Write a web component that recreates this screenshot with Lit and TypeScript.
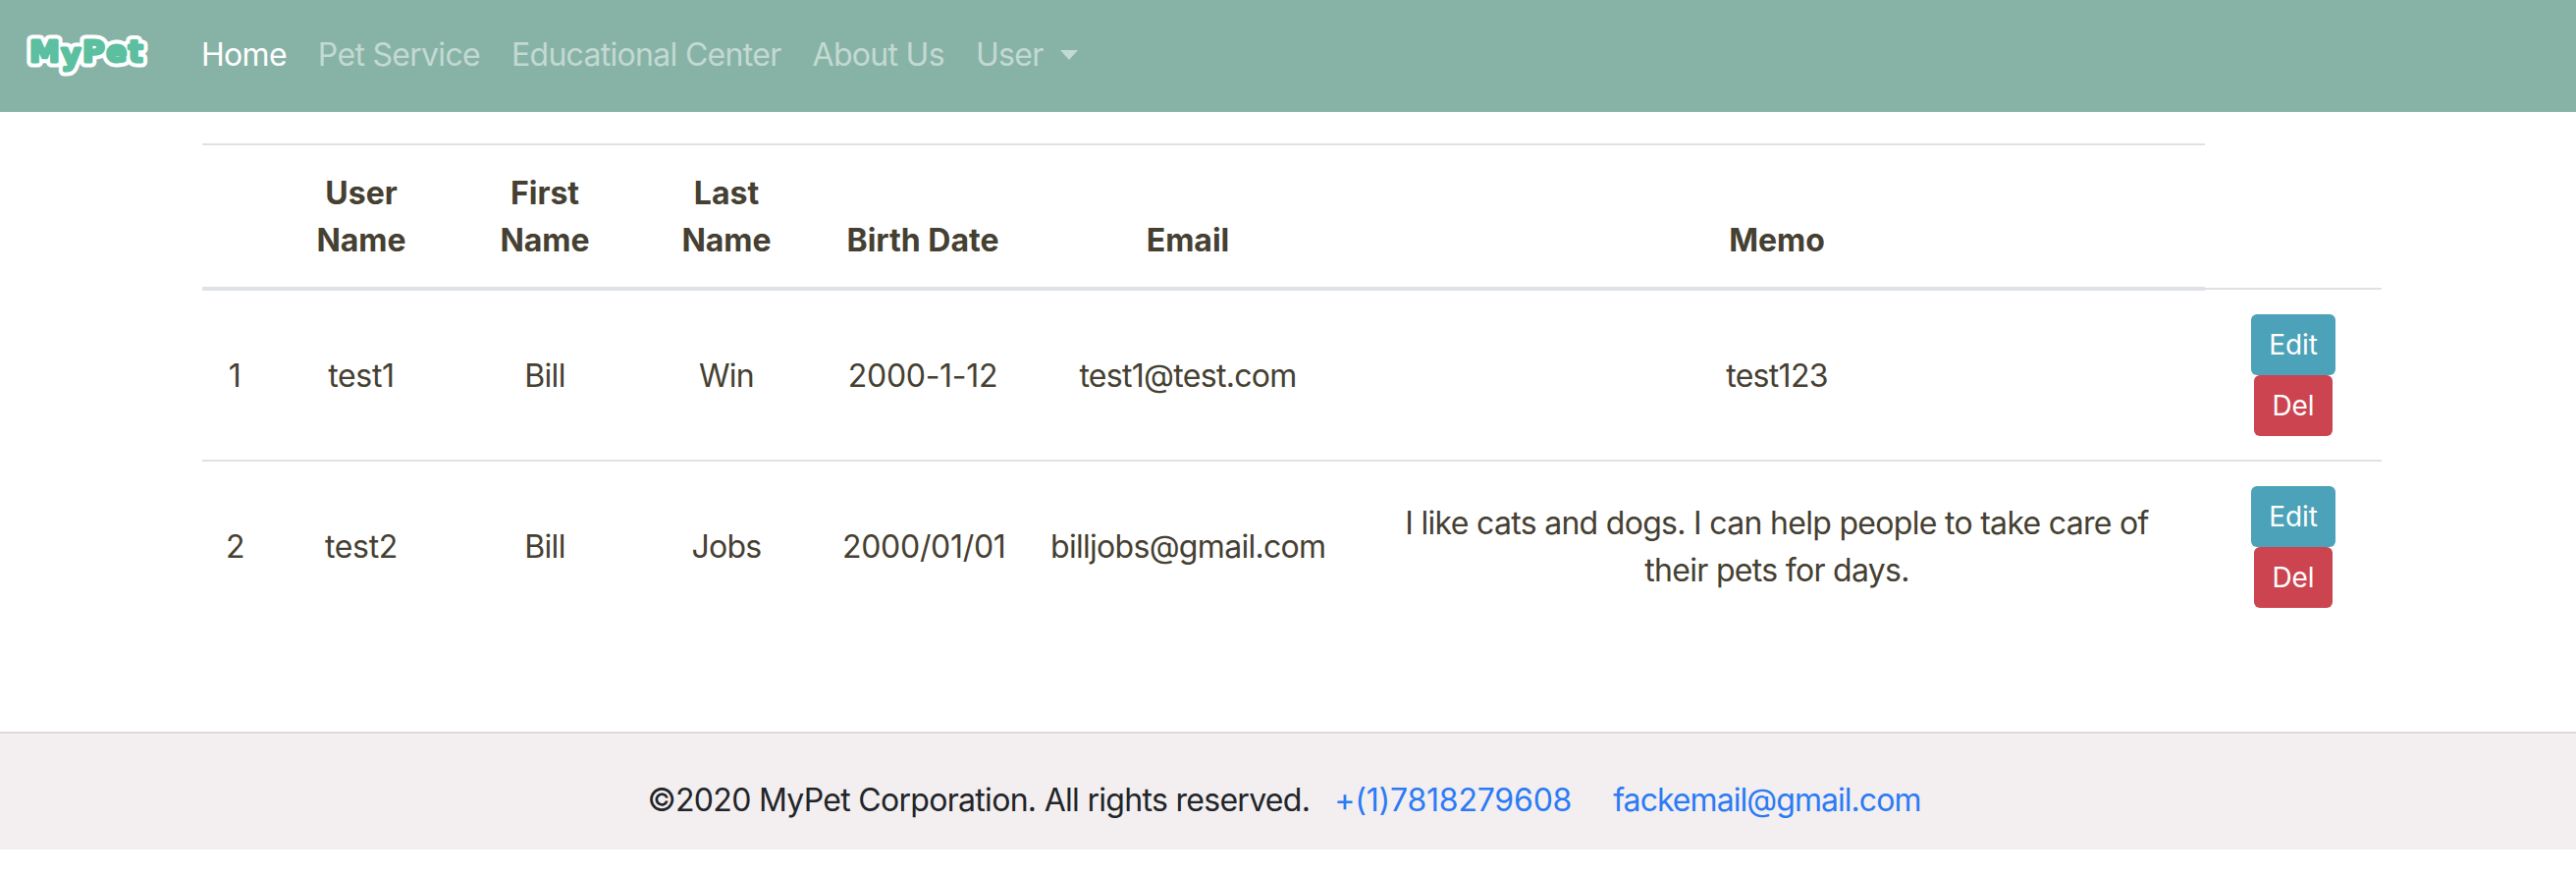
import { LitElement, html, css } from 'lit'
import { customElement } from 'lit/decorators.js'

interface Person {
  id: number
  user: string
  first: string
  last: string
  birth: string
  email: string
  memo: string
}

const people: Person[] = [
  { id: 1, user: 'test1', first: 'Bill', last: 'Win', birth: '2000-1-12', email: 'test1@test.com', memo: 'test123' },
  {
    id: 2,
    user: 'test2',
    first: 'Bill',
    last: 'Jobs',
    birth: '2000/01/01',
    email: 'billjobs@gmail.com',
    memo: 'I like cats and dogs. I can help people to take care of their pets for days.',
  },
]

@customElement('app-root')
export class AppRoot extends LitElement {
  static styles = css`
    :host {
      display: block;
      font-family: Inter, 'Liberation Sans', sans-serif;
      font-size: 32px;
      line-height: 1.5;
      letter-spacing: -0.7px;
      color: #454032;
      background: #fff;
    }

    /* Navbar */
    .navbar {
      display: flex;
      align-items: center;
      box-sizing: border-box;
      height: 114px;
      background: #87b3a6;
      padding: 0 0 2px 14px;
    }
    .logo {
      display: block;
      width: 150px;
      height: 64px;
      margin-right: 41px;
    }
    .logo text {
      font-family: 'DejaVu Sans', sans-serif;
      font-weight: 700;
      font-size: 31px;
      letter-spacing: 1.5px;
      stroke-linejoin: round;
    }
    .logo .halo {
      fill: #fff;
      stroke: #fff;
      stroke-width: 11px;
    }
    .logo .face {
      fill: #5bbfa0;
      stroke: #5bbfa0;
      stroke-width: 3px;
    }
    .nav {
      display: flex;
      align-items: center;
      gap: 32px;
      margin: 0;
      padding: 0;
      list-style: none;
    }
    .nav a {
      color: rgba(255, 255, 255, 0.5);
      text-decoration: none;
    }
    .nav a.active {
      color: #fff;
    }
    .caret {
      display: inline-block;
      margin-left: 18px;
      vertical-align: 6px;
      border-top: 10px solid currentColor;
      border-left: 9px solid transparent;
      border-right: 9px solid transparent;
    }

    /* Table */
    main {
      padding: 32px 0 102px 206px;
    }
    table {
      width: 2220px;
      table-layout: fixed;
      border-collapse: collapse;
      text-align: center;
    }
    .c-id { width: 66px; }
    .c-user { width: 192px; }
    .c-first { width: 182px; }
    .c-last { width: 188px; }
    .c-birth { width: 212px; }
    .c-email { width: 328px; }
    .c-memo { width: 872px; }
    .c-actions { width: 180px; }
    th {
      padding: 25px 24px 23px;
      font-weight: 700;
      letter-spacing: 0;
      vertical-align: bottom;
      border-top: 2px solid #dee2e6;
      border-bottom: 4px solid #dee2e6;
    }
    td {
      padding: 25px 24px 24px;
      vertical-align: middle;
      border-top: 2px solid #dee2e6;
    }
    td.num {
      letter-spacing: -0.3px;
    }
    .actions {
      display: flex;
      flex-direction: column;
      align-items: center;
    }
    .btn {
      font: inherit;
      font-size: 28px;
      line-height: 42px;
      letter-spacing: -0.1px;
      padding: 8px 16px;
      border: 2px solid transparent;
      border-radius: 6px;
      color: #fff;
      cursor: pointer;
    }
    .edit { background: #4ca2b8; }
    .del { background: #cc444f; }

    /* Footer */
    footer {
      display: flex;
      align-items: center;
      justify-content: center;
      height: 100px;
      padding: 18px 8px 0 0;
      background: #f3eeef;
      border-top: 2px solid #dedad8;
      color: #212529;
    }
    footer span {
      margin-right: 25px;
    }
    footer a {
      color: #2b7bf5;
      text-decoration: none;
      letter-spacing: -0.95px;
    }
    footer a.phone {
      margin-right: 42px;
      letter-spacing: -0.2px;
    }
  `

  render() {
    return html`
      <nav class="navbar">
        <svg class="logo" viewBox="0 0 150 64" aria-label="MyPet">
          <text class="halo" x="16" y="38.5">M<tspan dy="3">y</tspan><tspan dy="-3">Pet</tspan></text>
          <text class="face" x="16" y="38.5">M<tspan dy="3">y</tspan><tspan dy="-3">Pet</tspan></text>
        </svg>
        <ul class="nav">
          <li><a class="active" href="#">Home</a></li>
          <li><a href="#">Pet Service</a></li>
          <li><a href="#">Educational Center</a></li>
          <li><a href="#">About Us</a></li>
          <li><a href="#">User<span class="caret"></span></a></li>
        </ul>
      </nav>
      <main>
        <table>
          <colgroup>
            <col class="c-id" />
            <col class="c-user" />
            <col class="c-first" />
            <col class="c-last" />
            <col class="c-birth" />
            <col class="c-email" />
            <col class="c-memo" />
            <col class="c-actions" />
          </colgroup>
          <thead>
            <tr>
              <th></th>
              <th>User Name</th>
              <th>First Name</th>
              <th>Last Name</th>
              <th>Birth Date</th>
              <th>Email</th>
              <th>Memo</th>
            </tr>
          </thead>
          <tbody>
            ${people.map(
              (p) => html`
                <tr>
                  <td>${p.id}</td>
                  <td class="num">${p.user}</td>
                  <td>${p.first}</td>
                  <td>${p.last}</td>
                  <td class="num">${p.birth}</td>
                  <td>${p.email}</td>
                  <td>${p.memo}</td>
                  <td>
                    <div class="actions">
                      <button class="btn edit">Edit</button>
                      <button class="btn del">Del</button>
                    </div>
                  </td>
                </tr>
              `,
            )}
          </tbody>
        </table>
      </main>
      <footer>
        <span>©2020 MyPet Corporation. All rights reserved.</span>
        <a class="phone" href="#">+(1)7818279608</a>
        <a href="#">fackemail@gmail.com</a>
      </footer>
    `
  }
}

declare global {
  interface HTMLElementTagNameMap {
    'app-root': AppRoot
  }
}
